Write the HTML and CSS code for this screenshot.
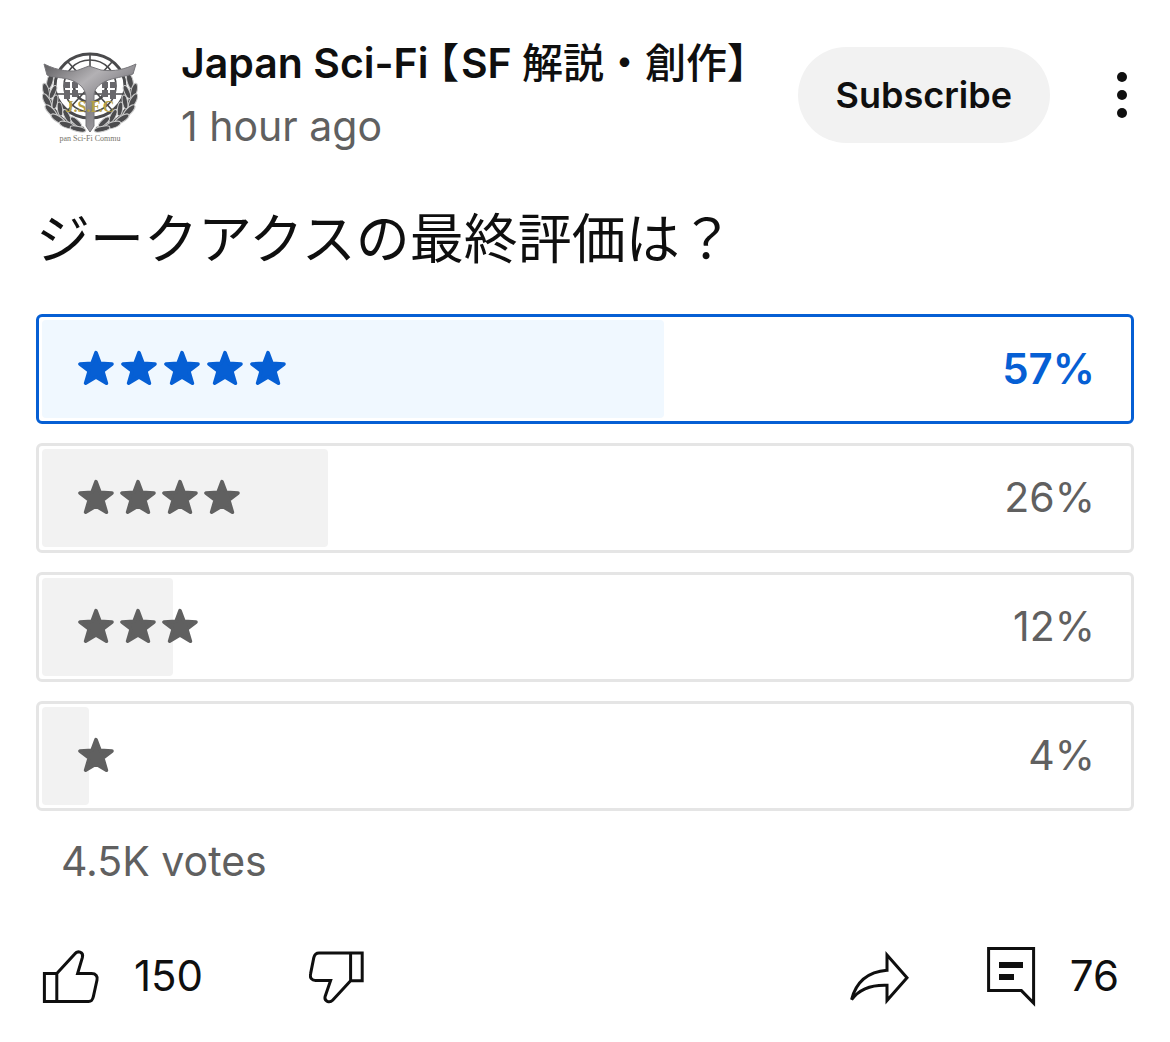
FILE: index.html
```html
<!doctype html>
<html lang="en">
<head>
  <meta charset="utf-8" />
  <meta name="viewport" content="width=device-width,initial-scale=1" />
  <title>Community poll</title>
  <link rel="stylesheet" href="styles.css">
</head>
<body>
  <!-- shared shapes -->
  <svg class="defs" width="0" height="0" aria-hidden="true">
    <symbol id="star" viewBox="0 0 36 36">
      <path d="M18 2.6 22 13.4 34 14 24.8 21 28.4 33.2 18 27 7.6 33.2 11.2 21 2 14 14 13.4Z" fill="currentColor" stroke="currentColor" stroke-width="3.6" stroke-linejoin="round"/>
    </symbol>
  </svg>

  <article class="post">
    <header class="post-header">
      <a class="avatar" href="#" aria-label="Channel page">
        <svg viewBox="0 0 96 92">
          <defs>
            <linearGradient id="metal" x1="0" y1="0" x2="1" y2="1">
              <stop offset="0" stop-color="#5f5e61"/>
              <stop offset=".35" stop-color="#b3b1b4"/>
              <stop offset=".6" stop-color="#858388"/>
              <stop offset="1" stop-color="#b9b8bb"/>
            </linearGradient>
            <!-- one half of the laurel wreath -->
            <g id="wreath">
              <path d="M9 24C2 48 14 70 42 76" fill="none" stroke="#555" stroke-width="2"/>
              <g fill="#4c4c4e" stroke="#c9c9c9" stroke-width="1">
                <ellipse cx="8" cy="29" rx="3" ry="8" transform="rotate(14 8 29)"/>
                <ellipse cx="4" cy="39" rx="3" ry="8" transform="rotate(-14 4 39)"/>
                <ellipse cx="11" cy="40" rx="2.6" ry="7" transform="rotate(24 11 40)"/>
                <ellipse cx="5" cy="49" rx="3" ry="8" transform="rotate(-28 5 49)"/>
                <ellipse cx="13" cy="50" rx="2.6" ry="7" transform="rotate(10 13 50)"/>
                <ellipse cx="9" cy="59" rx="3" ry="8" transform="rotate(-44 9 59)"/>
                <ellipse cx="18" cy="57" rx="2.6" ry="7" transform="rotate(-8 18 57)"/>
                <ellipse cx="16" cy="67" rx="3" ry="8" transform="rotate(-58 16 67)"/>
                <ellipse cx="25" cy="64" rx="2.6" ry="7" transform="rotate(-28 25 64)"/>
                <ellipse cx="25" cy="73" rx="3" ry="8" transform="rotate(-72 25 73)"/>
                <ellipse cx="34" cy="70" rx="2.6" ry="7" transform="rotate(-48 34 70)"/>
                <ellipse cx="36" cy="77" rx="2.6" ry="8" transform="rotate(-78 36 77)"/>
              </g>
            </g>
          </defs>
          <g fill="none" stroke="#4a4a4c">
            <ellipse cx="48" cy="34" rx="35" ry="32" stroke-width="3"/>
            <circle cx="48" cy="34" r="26" stroke-width="1.6"/>
            <circle cx="48" cy="34" r="16" stroke-width="2.6"/>
            <path d="M48 3v60M15 42h66M26 10l44 48M70 10 26 58" stroke-width="1.6"/>
          </g>
          <g fill="#68676b">
            <path d="M22 30h6v6h-6zM30 30h6v6h-6zM22 38h6v9h-6zM30 38h6v7h-6zM60 30h6v6h-6zM68 30h6v6h-6zM60 38h6v7h-6zM68 38h6v9h-6z"/>
          </g>
          <use href="#wreath"/>
          <use href="#wreath" transform="translate(96) scale(-1 1)"/>
          <path d="M2 12C16 19 31 21 39 17L47 14 59 18C73 20 83 17 94 12L91 22C81 25 71 26 64 29 56 33 52 37 52 44V74L48 80 44 74V44C43 36 37 31 29 28 21 25 11 26 5 23Z" fill="url(#metal)" stroke="#77767a"/>
          <text class="avatar-letters" x="48" y="60" text-anchor="middle">J.S.F.C</text>
          <text class="avatar-name" x="48" y="89" text-anchor="middle">pan Sci-Fi Commu</text>
        </svg>
      </a>
      <div class="author">
        <h2><a href="#">Japan Sci-Fi<span class="bracket open">【</span>SF <span class="kanji">解説・創作</span><span class="bracket">】</span></a></h2>
        <div class="time">1 hour ago</div>
      </div>
      <button class="subscribe">Subscribe</button>
      <button class="icon-btn menu" aria-label="More actions">
        <svg width="12" height="48" viewBox="0 0 12 48" fill="currentColor"><circle cx="6" cy="6" r="5"/><circle cx="6" cy="24" r="5"/><circle cx="6" cy="42" r="5"/></svg>
      </button>
    </header>

    <h1 lang="ja">ジークアクスの最終評価は？</h1>

    <section class="poll" aria-label="Poll">
      <button class="option selected" aria-pressed="true">
        <span class="track"><span class="fill" style="width:57.3%"></span></span>
        <span class="stars" role="img" aria-label="5 stars">
          <svg><use href="#star"/></svg><svg><use href="#star"/></svg><svg><use href="#star"/></svg><svg><use href="#star"/></svg><svg><use href="#star"/></svg>
        </span>
        <span class="percent">57%</span>
      </button>
      <button class="option" aria-pressed="false">
        <span class="track"><span class="fill" style="width:26.3%"></span></span>
        <span class="stars" role="img" aria-label="4 stars">
          <svg><use href="#star"/></svg><svg><use href="#star"/></svg><svg><use href="#star"/></svg><svg><use href="#star"/></svg>
        </span>
        <span class="percent">26%</span>
      </button>
      <button class="option" aria-pressed="false">
        <span class="track"><span class="fill" style="width:12.1%"></span></span>
        <span class="stars" role="img" aria-label="3 stars">
          <svg><use href="#star"/></svg><svg><use href="#star"/></svg><svg><use href="#star"/></svg>
        </span>
        <span class="percent">12%</span>
      </button>
      <button class="option" aria-pressed="false">
        <span class="track"><span class="fill" style="width:4.3%"></span></span>
        <span class="stars" role="img" aria-label="1 star">
          <svg><use href="#star"/></svg>
        </span>
        <span class="percent">4%</span>
      </button>
      <div class="votes">4.5K votes</div>
    </section>

    <footer class="actions">
      <button class="icon-btn like" aria-label="Like, 150">
        <svg width="58" height="60" viewBox="0 -2 58 60">
          <path d="M14.8 24.6H2.4V52.4H14.8ZM14.8 24.6 32.7 5C35.4 1.4 41.8 2.6 40.4 8.4L35.6 24.6H49.6C53.8 24.6 56 27.4 55 31L51.4 47.4C50.6 51 49.8 52.4 46.6 52.4H14.8"/>
        </svg>
        <span>150</span>
      </button>
      <button class="icon-btn dislike" aria-label="Dislike">
        <svg width="56" height="60" viewBox="0 -3 56 60">
          <path d="M41.6 3H53.2V30.8H41.6ZM41.6 3H10C6.6 3 5.6 4.4 4.8 7.6L1.6 23.6C.6 28 2.8 30.4 6.6 30.4H21.6L16.2 46.2C14.8 51.4 20.6 53.4 23.6 50.2L41.6 30.8"/>
        </svg>
      </button>
      <button class="icon-btn share" aria-label="Share">
        <svg width="60" height="60" viewBox="0 -4 60 60">
          <path d="M38 4 58 26.7 38 49.5V34.2C22 33.6 10 38.4 2.6 48.6 7 31.4 19 20.8 38 19.3Z"/>
        </svg>
      </button>
      <button class="icon-btn comments" aria-label="Comments, 76">
        <svg width="50" height="60" viewBox="0 0 50 60">
          <path d="M2.6 1.6H47.6V56L35.4 43.6H2.6Z"/>
          <path class="solid" d="M13 15h24v6H13zM13 27h15v6H13z"/>
        </svg>
        <span>76</span>
      </button>
    </footer>
  </article>
</body>
</html>
```
FILE: styles.css
```css
:root{
  --text:#0f0f0f; --muted:#606060; --line:#e5e5e5; --soft:#f2f2f2; --blue:#065fd4;
  font-family: Inter, "Noto Sans CJK JP", sans-serif;
}
*{box-sizing:border-box}
body{margin:0;background:#fff;color:var(--text)}
a{color:inherit;text-decoration:none}
button{font:inherit;color:inherit;background:none;border:none;padding:0;cursor:pointer}
svg{display:block}
.defs{position:absolute}

.post{padding:32px 36px}

.post-header{display:flex;align-items:center}
.avatar{width:96px;margin-left:6px;padding-top:6px}
.avatar-letters{font:700 16px "Liberation Serif", serif;fill:#b5a046}
.avatar-name{font:8px "Liberation Serif", serif;fill:#77746a}
.author{flex:1;margin-left:43px;white-space:nowrap}
.author h2{margin:0;font-size:41px;line-height:62px;font-weight:600}
.kanji{font-weight:500}
.bracket{font-feature-settings:"halt"}
.open{margin:0 2px 0 10px}
.time{font-size:41px;line-height:64px;color:var(--muted)}
.subscribe{height:96px;padding:0 38px;border-radius:48px;background:var(--soft);font-size:36px;font-weight:600}
.menu{margin:0 6px 0 66px}

h1{margin:44px 0 36px;font-size:54px;line-height:76px;font-weight:400}

.poll{display:flex;flex-direction:column;gap:19px}
.option{position:relative;display:flex;align-items:center;justify-content:space-between;height:110px;padding:0 36px 2px 39px;border:3px solid var(--line);border-radius:6px;color:var(--muted)}
/* the result bar lies under the label */
.track{position:absolute;inset:3px}
.fill{display:block;height:100%;border-radius:4px;background:var(--soft)}
.stars{position:relative;display:flex;gap:6px}
.stars svg{width:36px;height:36px}
.percent{position:relative;font-size:41px}
.selected{border-color:var(--blue);color:var(--blue)}
.selected .fill{background:#f0f8ff}
.selected .stars{gap:7px}
.selected .percent{font-size:42px;font-weight:600}
.votes{padding-left:25px;font-size:41px;line-height:62px;color:var(--muted)}

.actions{display:flex;align-items:center;margin-top:55px;padding:0 15px 0 6px;font-size:42px}
.icon-btn{display:flex;align-items:center}
.actions svg{fill:none;stroke:var(--text);stroke-width:3}
.actions .solid{fill:var(--text);stroke:none}
.actions span{padding-bottom:4px}
.like,.comments{gap:34px}
.dislike{margin-left:106px}
.share{margin-left:auto}
.comments{margin-left:77px}
```
